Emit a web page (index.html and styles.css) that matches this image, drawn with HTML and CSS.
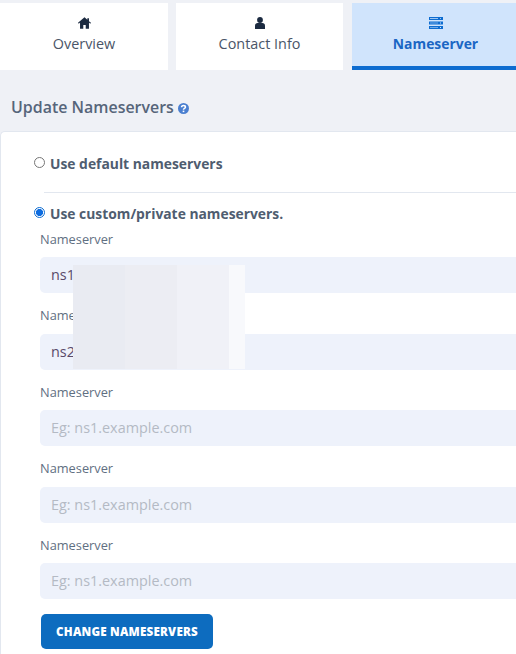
FILE: index.html
```html
<!DOCTYPE html>
<html lang="en">
<head>
<meta charset="utf-8">
<title>Nameserver</title>
<link rel="stylesheet" href="styles.css">
</head>
<body>
<nav class="tabs">
  <a class="tab">
    <svg class="tab-icon" viewBox="0 0 16 14" width="13" height="12"><path fill="#1b2a40" d="M8 0 0 6.800l.9 1L2.500 6.500V14h4V9.500h3V14h4V6.500l1.600 1.300.9-1L13.500 4.700V1h-2v2L8 0z"/></svg>
    <span>Overview</span>
  </a>
  <a class="tab">
    <svg class="tab-icon" viewBox="0 0 10 12" width="10" height="12"><circle cx="5" cy="3" r="2.900" fill="#1b2a40"/><path fill="#1b2a40" d="M0 12V8.500C0 7 1.200 6 2.500 6h5C8.800 6 10 7 10 8.500V12z"/></svg>
    <span>Contact Info</span>
  </a>
  <a class="tab tab-active">
    <svg class="tab-icon" viewBox="0 0 14 12" width="14" height="12"><path fill="#0d6cd0" d="M0 0h14v3H0zM0 4.500h14v3H0zM0 9h14v3H0z"/><path fill="#d0e4fc" d="M1 1.300h8v.6H1zM11 1.200h1v.8h-1zM1 5.700h8v.6H1zM11 5.600h1v.8h-1zM1 10.200h8v.6H1zM11 10.100h1v.8h-1z"/></svg>
    <span>Nameserver</span>
  </a>
</nav>

<h2 class="title">Update Nameservers
  <svg class="help" viewBox="0 0 12 12" width="11" height="11"><circle cx="6" cy="6" r="6" fill="#4a7fd0"/><path fill="none" stroke="#fff" stroke-width="1.700" d="M3.900 4.600c0-1.300 1-1.900 2.100-1.900s2.100.7 2.100 1.800c0 1.500-2.100 1.400-2.100 2.800"/><rect x="5.100" y="8.300" width="1.800" height="1.700" fill="#fff"/></svg>
</h2>

<main class="card">
  <label class="radio-row first"><span class="radio"></span>Use default nameservers</label>
  <hr class="divider">
  <label class="radio-row"><span class="radio radio-on"></span>Use custom/private nameservers.</label>
  <div class="fields">
    <div class="field"><div class="label">Nameserver</div><div class="input">ns1</div></div>
    <div class="field"><div class="label">Nameserver</div><div class="input">ns2</div></div>
    <div class="field"><div class="label">Nameserver</div><div class="input placeholder">Eg: ns1.example.com</div></div>
    <div class="field"><div class="label">Nameserver</div><div class="input placeholder">Eg: ns1.example.com</div></div>
    <div class="field"><div class="label">Nameserver</div><div class="input placeholder">Eg: ns1.example.com</div></div>
  </div>
  <button class="submit">CHANGE NAMESERVERS</button>
  <div class="redaction"><i class="b1"></i><i class="b2"></i><i class="b3"></i><i class="b4"></i></div>
</main>
</body>
</html>
```

FILE: styles.css
```css
html, body { margin: 0; padding: 0; height: 100%; overflow: hidden; }
body {
  background: #eff1f6;
  font-family: "Open Sans", sans-serif;
  color: #4a5568;
  width: 516px;
  height: 654px;
  position: relative;
}
.tabs {
  display: grid;
  grid-template-columns: 168px 167px 168px;
  column-gap: 8px;
  padding-top: 3px;
}
.tabs .tab:nth-child(3) { margin-left: 1px; }
.tab {
  height: 67px;
  box-sizing: border-box;
  background: #fff;
  display: flex;
  flex-direction: column;
  align-items: center;
  padding-top: 14px;
  font-size: 14.4px;
  line-height: 19px;
  color: #4a5568;
}
.tab-icon { display: block; height: 12px; margin-bottom: 5px; }
.tab-active {
  background: #d0e4fc;
  border-bottom: 4px solid #0d6cd0;
  color: #1a66c4;
  font-weight: 700;
  font-size: 13.9px;
}
.title {
  margin: 0;
  padding: 26px 0 0 11px;
  height: 35px;
  font-size: 15.95px;
  font-weight: 600;
  line-height: 22px;
  color: #56657a;
}
.help { vertical-align: -1px; margin-left: 0; }
.card {
  background: #fff;
  border: 1px solid #e2e7ef;
  border-right: 0;
  border-radius: 5px 0 0 0;
  width: 540px;
  height: 540px;
  box-sizing: border-box;
  position: relative;
  padding: 0 0 0 39px;
}
.radio-row {
  display: flex;
  align-items: center;
  margin-left: -6px;
  font-size: 13.85px;
  font-weight: 700;
  line-height: 19px;
  color: #4f5d70;
}
.radio-row.first { padding-top: 22px; }
.radio {
  width: 11px;
  height: 11px;
  border: 1px solid #767676;
  border-radius: 50%;
  box-sizing: border-box;
  margin-right: 5px;
  margin-top: -2px;
  background: #fff;
}
.radio-on {
  border: 1px solid #0d6cd0;
  background: radial-gradient(circle, #0d6ce0 0 3.3px, #fff 3.8px);
}
.divider {
  border: 0;
  border-top: 1px solid #e2e7ef;
  margin: 19px 0 11px 4px;
}
.fields { display: flex; flex-direction: column; }
.field { height: 76.500px; }
.label {
  font-size: 12.8px;
  line-height: 18px;
  color: #5f6f82;
  padding-top: 6.750px;
  padding-bottom: 9.250px;
}
.input {
  background: #eef2fb;
  border-radius: 5px;
  height: 36px;
  line-height: 35px;
  padding-left: 11px;
  font-size: 14.4px;
  color: #5a4a6a;
}
.placeholder { color: #b4bac4; }
.submit {
  display: block;
  margin: 8px 0 0 1px;
  width: 172px;
  height: 35px;
  border: 0;
  border-radius: 5px;
  background: #0d6cbf;
  color: #fff;
  font-family: "Open Sans", sans-serif;
  font-size: 11.6px;
  font-weight: 800;
  letter-spacing: .22px;
  padding: 0;
}
.redaction {
  position: absolute;
  left: 72px;
  top: 133px;
  width: 172px;
  height: 104px;
  display: grid;
  grid-template-columns: 52px 52px 52px 16px;
}
.b1 { background: #e9ebf2; }
.b2 { background: #ecedf3; }
.b3 { background: #f0f1f7; }
.b4 { background: #f8f9fc; }
```
